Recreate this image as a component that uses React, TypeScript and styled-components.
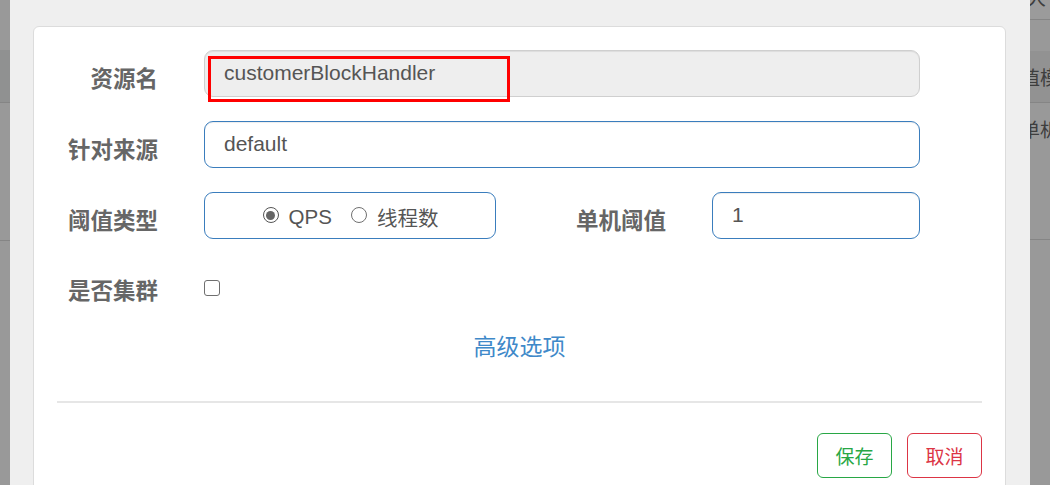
import React from "react";
import styled, { createGlobalStyle } from "styled-components";

const GlobalStyle = createGlobalStyle`
  html, body { margin: 0; padding: 0; }
  body {
    font-family: "Liberation Sans", "Noto Sans CJK SC", sans-serif;
    background: #999;
  }
  * { box-sizing: border-box; }
`;

const Page = styled.div`
  display: flex;
  width: 1050px;
  height: 485px;
  overflow: hidden;
  background: #999;
`;

const Strip = styled.div<{ $w: number }>`
  width: ${(p) => p.$w}px;
  flex: none;
  display: flex;
  flex-direction: column;
  overflow: hidden;
  background: #999;
`;

const StripRow = styled.div<{ $h: number; $bg?: string; $line?: boolean }>`
  height: ${(p) => p.$h}px;
  flex: none;
  background: ${(p) => p.$bg || "#999"};
  border-bottom: ${(p) => (p.$line ? "1px solid #858585" : "none")};
  display: flex;
  align-items: center;
  overflow: hidden;
  white-space: nowrap;
`;

const StripText = styled.span<{ $shift: number; $lift?: number }>`
  margin-left: ${(p) => p.$shift}px;
  margin-top: ${(p) => p.$lift ?? 0}px;
  font-size: 19px;
  color: #3e3e3e;
  font-family: "Noto Sans CJK SC", sans-serif;
`;

const ModalArea = styled.div`
  width: 1020px;
  flex: none;
  background: #efefef;
  padding: 26px 24px 0 23px;
  overflow: hidden;
`;

const Card = styled.div`
  display: flex;
  flex-direction: column;
  background: #fff;
  border: 1px solid #dcdcdc;
  border-radius: 6px;
  padding: 23px 23px 0 23px;
  height: 520px;
`;

const Row = styled.div<{ $mb?: number; $mt?: number; $h?: number }>`
  display: flex;
  align-items: center;
  flex: none;
  height: ${(p) => p.$h ?? 47}px;
  margin-top: ${(p) => p.$mt ?? 0}px;
  margin-bottom: ${(p) => p.$mb ?? 24}px;
`;

const Label = styled.label<{ $w?: number }>`
  width: ${(p) => p.$w ?? 101}px;
  flex: none;
  margin-right: 46px;
  text-align: right;
  font-family: "Noto Sans CJK SC", sans-serif;
  font-weight: bold;
  font-size: 22.5px;
  color: #666;
  padding-top: 6px;
  white-space: nowrap;
`;

const InputBox = styled.div<{ $w: number; $readonly?: boolean }>`
  position: relative;
  width: ${(p) => p.$w}px;
  height: 47px;
  flex: none;
  border: 1px solid ${(p) => (p.$readonly ? "#cfcfcf" : "#3a7dbd")};
  background: ${(p) => (p.$readonly ? "#eee" : "#fff")};
  border-radius: 9px;
  box-shadow: inset 0 1px 1px rgba(0, 0, 0, 0.075);
  padding-left: 19px;
  display: flex;
  align-items: center;
  font-size: 21px;
  color: #555;
  padding-bottom: 1px;
`;

const Annotation = styled.div`
  position: absolute;
  left: 3px;
  top: 5px;
  width: 302px;
  height: 46px;
  border: 3px solid #ff0000;
  pointer-events: none;
`;

const RadioGroup = styled.div`
  width: 292px;
  height: 47px;
  flex: none;
  border: 1px solid #3a7dbd;
  border-radius: 9px;
  display: flex;
  align-items: center;
  justify-content: center;
  padding-top: 2px;
  padding-left: 1px;
`;

const RadioOption = styled.span`
  display: inline-flex;
  align-items: center;
  font-size: 20.5px;
  color: #555;
  margin-right: 19px;
  &:last-child { margin-right: 0; }
`;

const RadioDot = styled.span<{ $checked?: boolean }>`
  width: 16px;
  height: 16px;
  border-radius: 50%;
  border: 1.6px solid ${(p) => (p.$checked ? "#555" : "#707070")};
  display: inline-flex;
  align-items: center;
  justify-content: center;
  margin-right: 10px;
  margin-top: -3px;
  &::after {
    content: "";
    width: 9px;
    height: 9px;
    border-radius: 50%;
    background: ${(p) => (p.$checked ? "#666" : "transparent")};
  }
`;

const RadioText = styled.span`
  font-family: "Liberation Sans", "Noto Sans CJK SC", sans-serif;
`;

const Checkbox = styled.span`
  width: 16px;
  height: 16px;
  flex: none;
  border: 1.5px solid #6f6f6f;
  border-radius: 3px;
  background: #fff;
  margin-top: 4px;
`;

const LinkRow = styled.div`
  display: flex;
  flex: none;
  justify-content: center;
  margin-top: 27px;
  height: 40px;
`;

const AdvancedLink = styled.a`
  font-family: "Noto Sans CJK SC", sans-serif;
  font-size: 23px;
  color: #3f89c9;
  text-decoration: none;
  cursor: pointer;
`;

const Divider = styled.div`
  flex: none;
  height: 2px;
  background: #e6e6e6;
  margin-top: 33px;
`;

const Footer = styled.div`
  display: flex;
  flex: none;
  justify-content: flex-end;
  gap: 15px;
  margin-top: 30px;
`;

const Button = styled.button<{ $variant: "success" | "danger" }>`
  width: 75px;
  height: 45px;
  border-radius: 6px;
  background: #fff;
  border: 1px solid ${(p) => (p.$variant === "success" ? "#28a745" : "#dc3545")};
  color: ${(p) => (p.$variant === "success" ? "#28a745" : "#dc3545")};
  font-family: "Noto Sans CJK SC", sans-serif;
  font-size: 19px;
  padding: 0;
  cursor: pointer;
`;

export default function App() {
  return (
    <>
      <GlobalStyle />
      <Page>
        <Strip $w={10}>
          <StripRow $h={50} />
          <StripRow $h={53} $bg="#909191" $line />
          <StripRow $h={138} $line />
          <StripRow $h={244} />
        </Strip>
        <ModalArea>
          <Card>
            <Row>
              <Label>资源名</Label>
              <InputBox $w={716} $readonly>
                customerBlockHandler
                <Annotation />
              </InputBox>
            </Row>
            <Row>
              <Label>针对来源</Label>
              <InputBox $w={716}>default</InputBox>
            </Row>
            <Row>
              <Label>阈值类型</Label>
              <RadioGroup>
                <RadioOption>
                  <RadioDot $checked />
                  <RadioText>QPS</RadioText>
                </RadioOption>
                <RadioOption>
                  <RadioDot />
                  <RadioText>线程数</RadioText>
                </RadioOption>
              </RadioGroup>
              <Label $w={170}>单机阈值</Label>
              <InputBox $w={208}>1</InputBox>
            </Row>
            <Row $h={30} $mb={0} $mt={8}>
              <Label>是否集群</Label>
              <Checkbox />
            </Row>
            <LinkRow>
              <AdvancedLink>高级选项</AdvancedLink>
            </LinkRow>
            <Divider />
            <Footer>
              <Button $variant="success">保存</Button>
              <Button $variant="danger">取消</Button>
            </Footer>
          </Card>
        </ModalArea>
        <Strip $w={20}>
          <StripRow $h={20} $bg="#9b9b9b" $line>
            <StripText $shift={-3} $lift={-26}>大</StripText>
          </StripRow>
          <StripRow $h={31} />
          <StripRow $h={52} $bg="#929292" $line>
            <StripText $shift={-9}>值模式</StripText>
          </StripRow>
          <StripRow $h={50}>
            <StripText $shift={-9}>单机</StripText>
          </StripRow>
          <StripRow $h={87} $line />
          <StripRow $h={244} />
        </Strip>
      </Page>
    </>
  );
}
